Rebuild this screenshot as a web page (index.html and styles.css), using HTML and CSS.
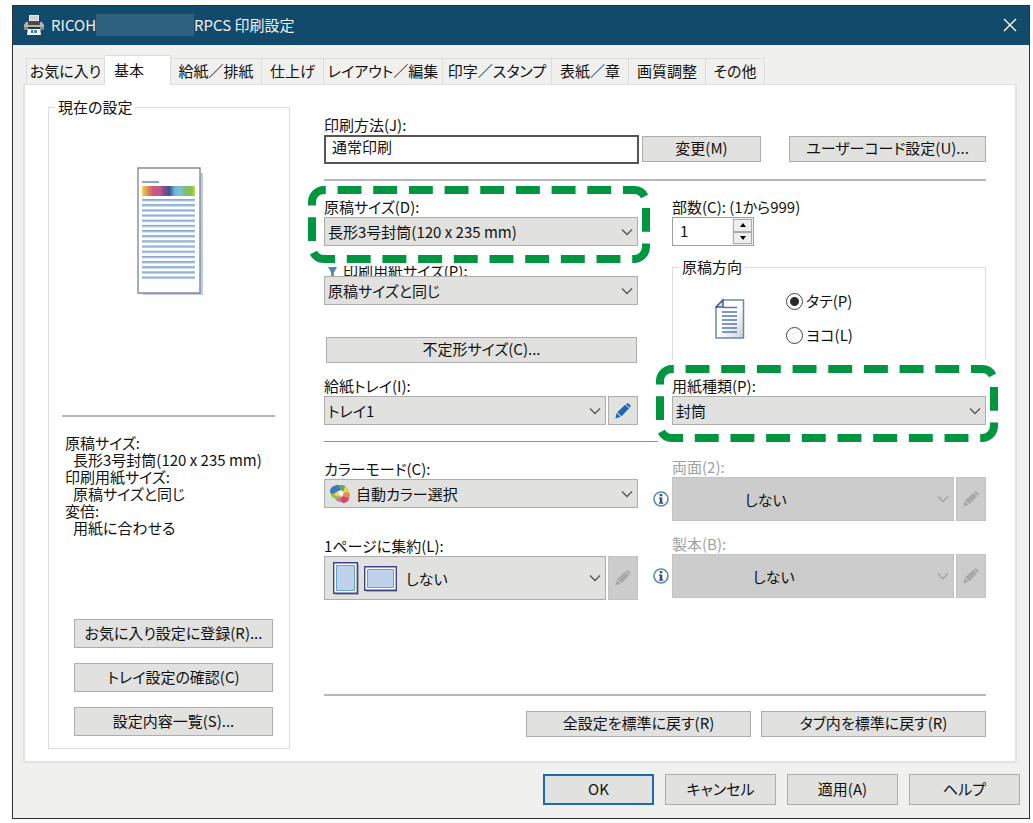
FILE: index.html
```html
<!DOCTYPE html>
<html lang="ja">
<head>
<meta charset="utf-8">
<title>RPCS 印刷設定</title>
<link rel="stylesheet" href="styles.css">
</head>
<body>
<svg class="defs" aria-hidden="true">
  <symbol id="chevron" viewBox="0 0 12 8"><path d="M1 1.5 6 6.5 11 1.5" fill="none" stroke="currentColor" stroke-width="1.3"/></symbol>
  <symbol id="pencil" viewBox="0 0 16 16"><path d="M11 1.200 12.200.300Q13 0 13.800.800L15.200 2.200Q16 3 15.300 4L14.500 4.800ZM10.200 1.800 14 5.600 6.500 13.200 2.200 9.200ZM1.600 10 5.600 13.800 .4 15.600Z" fill="currentColor"/></symbol>
  <symbol id="info" viewBox="0 0 16 16"><circle cx="8" cy="8" r="7" fill="#fff" stroke="#5a86be" stroke-width="1.600"/><path d="M6.700 3h2.600v2.200H6.700zM6 6.400h3.300v5h1v1.400H6v-1.400h.800V7.800H6z" fill="#2a5288"/></symbol>
</svg>
<div class="window">
  <header class="titlebar">
    <svg class="printer" viewBox="0 0 20 20" aria-hidden="true">
      <path d="M5 0h10v8H5z" fill="#e9e9e9"/><path d="M6 2h8M6 4h8" stroke="#bbb"/>
      <path d="M2 7h16l2 3v5H0v-5z" fill="#b4b4b4"/><path d="M4 6h12v4H4z" fill="#4a4a4a"/><path d="M0 12h20v3H0z" fill="#888"/>
      <path d="M4 12h12l1 8H3z" fill="#f5f5f5"/><path d="M4 12h12v2H4z" fill="#333"/>
      <path d="M7 15h2v3H7z" fill="#2a6fb0"/><path d="M10 15h3v3h-3z" fill="#2f9a8c"/>
    </svg>
    <h1>RICOH<span class="mask"></span>RPCS 印刷設定</h1>
    <button class="close" type="button" aria-label="閉じる"><svg viewBox="0 0 14 14"><path d="M1 1 13 13M13 1 1 13" stroke="#fff" stroke-width="1.4"/></svg></button>
  </header>

  <nav class="tabs" role="tablist">
    <button class="tab w79" role="tab" type="button">お気に入り</button>
    <button class="tab active" role="tab" type="button" aria-selected="true">基本</button>
    <button class="tab w91" role="tab" type="button">給紙／排紙</button>
    <button class="tab w62" role="tab" type="button">仕上げ</button>
    <button class="tab w119" role="tab" type="button">レイアウト／編集</button>
    <button class="tab w109" role="tab" type="button">印字／スタンプ</button>
    <button class="tab w77" role="tab" type="button">表紙／章</button>
    <button class="tab w77" role="tab" type="button">画質調整</button>
    <button class="tab w59" role="tab" type="button">その他</button>
  </nav>

  <main class="panel">
    <fieldset class="group current">
      <legend>現在の設定</legend>
      <div class="preview">
        <svg viewBox="0 0 68 129" aria-hidden="true">
          <defs>
            <linearGradient id="rainbow"><stop offset="0" stop-color="#f0d468"/><stop offset=".12" stop-color="#d98a4a"/><stop offset=".22" stop-color="#c9568a"/><stop offset=".34" stop-color="#c3568c"/><stop offset=".42" stop-color="#7a4f86"/><stop offset=".52" stop-color="#3f5590"/><stop offset=".62" stop-color="#6fb6dc"/><stop offset=".72" stop-color="#7cc4d0"/><stop offset=".82" stop-color="#7abf6c"/><stop offset=".94" stop-color="#8cc152"/><stop offset="1" stop-color="#c8d84a"/></linearGradient>
            <pattern id="rows" width="10" height="5.170" patternUnits="userSpaceOnUse" y="32"><path d="M0 0h10v2H0z" fill="#86a6d2"/><path d="M0 1.200h10v1H0z" fill="#a9c4e0"/></pattern>
          </defs>
          <path d="M6 6h60v122H6z" fill="#bccbea"/>
          <path d="M1 1h62v125H1z" fill="#fff" stroke="#868a90" stroke-width="1.400"/>
          <path d="M5 14h17v2H5z" fill="#86a6d2"/>
          <path d="M5 19h53v10H5z" fill="url(#rainbow)"/>
          <path d="M5 32h53v80H5z" fill="url(#rows)"/>
        </svg>
      </div>
      <hr>
      <dl class="summary">
        <dt>原稿サイズ:</dt><dd>長形3号封筒(120 x 235 mm)</dd>
        <dt>印刷用紙サイズ:</dt><dd>原稿サイズと同じ</dd>
        <dt>変倍:</dt><dd>用紙に合わせる</dd>
      </dl>
      <div class="stack">
        <button class="btn" type="button">お気に入り設定に登録(R)...</button>
        <button class="btn" type="button">トレイ設定の確認(C)</button>
        <button class="btn" type="button">設定内容一覧(S)...</button>
      </div>
    </fieldset>

    <section class="settings">
      <div class="method">
        <div class="field">
          <label for="method">印刷方法(J):</label>
          <input id="method" class="textbox" type="text" value="通常印刷" readonly>
        </div>
        <button class="btn change" type="button">変更(M)</button>
        <button class="btn usercode" type="button">ユーザーコード設定(U)...</button>
      </div>
      <hr class="rule-top">

      <div class="columns">
        <div class="col">
          <div class="field marked">
            <label for="size">原稿サイズ(D):</label>
            <div class="select"><select id="size"><option>長形3号封筒(120 x 235 mm)</option></select><svg><use href="#chevron"/></svg></div>
            <svg class="mark" aria-hidden="true"><rect class="ring" pathLength="2200"/></svg>
          </div>
          <div class="field paper">
            <label class="cut" for="paper"><span><svg viewBox="0 0 10 10" aria-hidden="true"><path d="M0 0h10L6.500 6v4h-3V6z" fill="#4b86bf"/></svg>印刷用紙サイズ(P):</span></label>
            <div class="select"><select id="paper"><option>原稿サイズと同じ</option></select><svg><use href="#chevron"/></svg></div>
          </div>
          <button class="btn custom" type="button">不定形サイズ(C)...</button>
          <div class="field tray">
            <label for="tray">給紙トレイ(I):</label>
            <div class="pair">
              <div class="select"><select id="tray"><option>トレイ1</option></select><svg><use href="#chevron"/></svg></div>
              <button class="edit" type="button" aria-label="トレイを編集"><svg><use href="#pencil"/></svg></button>
            </div>
          </div>
          <hr class="rule-mid">
          <div class="field">
            <label for="color">カラーモード(C):</label>
            <div class="select icon"><select id="color"><option>自動カラー選択</option></select>
              <svg class="swirl" viewBox="0 0 20 18" aria-hidden="true">
                <path d="M0 7C0 2 4 0 8 0Q12 1 12 5L8 6Q6 8 4 10Q1 10 0 7" fill="#3f78b8"/>
                <path d="M8 0Q14-1 16 2L14 8 11 5Q10 3 8 0" fill="#58ad62"/>
                <path d="M15 1Q20 4 19 8L13 8Q14 4 15 1" fill="#e8d040"/>
                <path d="M19 7Q21 12 18 14L13 11V8Z" fill="#e88a50"/>
                <path d="M13 11 19 13Q19 17 14 18Q10 18 10 13Z" fill="#d3486c"/>
                <path d="M10 12 11 17Q6 17 5 13Q7 12 10 12" fill="#e06aa0"/>
                <path d="M1 9Q5 9 8 6L9 10 11 12Q8 15 4 13Q1 12 1 9" fill="#8cc14c"/>
                <path d="M4 9 8 6 9 11Q6 12 4 9" fill="#f0d84a"/>
                <circle cx="11" cy="8" r="2.500" fill="#fff"/>
              </svg>
              <svg><use href="#chevron"/></svg></div>
          </div>
          <div class="field nup">
            <label for="nup">1ページに集約(L):</label>
            <div class="pair tall">
              <div class="select pages"><select id="nup"><option>しない</option></select>
                <svg class="sheets" viewBox="0 0 64 33" aria-hidden="true">
                  <path d="M2 2h24v31H2zM33 6h31v24H33z" fill="#a8a8a8"/>
                  <path d="M.700.700h23.600v30.600H.700zM31.700 4.700h31.600v23.600H31.700z" fill="#fff" stroke="#3c4488" stroke-width="1.400"/>
                  <path d="M3.500 3.500h18v25h-18zM34.500 7.500h26v18h-26z" fill="#bfd2ea" stroke="#65a3cf"/>
                </svg>
                <svg><use href="#chevron"/></svg></div>
              <button class="edit" type="button" disabled aria-label="集約を編集"><svg><use href="#pencil"/></svg></button>
            </div>
          </div>
        </div>

        <div class="col">
          <div class="field">
            <label for="copies">部数(C): (1から999)</label>
            <div class="spinner">
              <input id="copies" type="text" value="1">
              <div class="steps">
                <button type="button" aria-label="増やす"><svg viewBox="0 0 8 4"><path d="M1 4 4 0 7 4z"/></svg></button>
                <button type="button" aria-label="減らす"><svg viewBox="0 0 8 4"><path d="M1 0 4 4 7 0z"/></svg></button>
              </div>
            </div>
          </div>
          <fieldset class="group orient">
            <legend>原稿方向</legend>
            <svg class="doc" viewBox="0 0 30 40" aria-hidden="true">
              <defs><linearGradient id="sheet" x1="0" y1="0" x2="1" y2="1"><stop offset=".5" stop-color="#fff"/><stop offset="1" stop-color="#c9cfd6"/></linearGradient></defs>
              <path d="M8 1H28.500V39H1V8.500Z" fill="url(#sheet)" stroke="#6d86ac" stroke-width="1.500"/>
              <path d="M8 1V8H1Z" fill="#dfe8f4" stroke="#3d598c" stroke-width="1.500"/>
              <path d="M8 8.500H22M7 13H22M7 17H22M7 21H22M7 25H22M7 29H22M7 33H22" stroke="#5277b8" stroke-width="1.700"/>
            </svg>
            <div class="radios">
              <label><input type="radio" name="dir" checked>タテ(P)</label>
              <label><input type="radio" name="dir">ヨコ(L)</label>
            </div>
          </fieldset>
          <div class="field marked type">
            <label for="type">用紙種類(P):</label>
            <div class="select"><select id="type"><option>封筒</option></select><svg><use href="#chevron"/></svg></div>
            <svg class="mark" aria-hidden="true"><rect class="ring" pathLength="2200"/></svg>
          </div>
          <div class="field off duplex">
            <label for="duplex">両面(2):</label>
            <div class="pair tall">
              <div class="select near"><select id="duplex" disabled><option>しない</option></select><svg><use href="#chevron"/></svg></div>
              <button class="edit" type="button" disabled aria-label="両面を編集"><svg><use href="#pencil"/></svg></button>
            </div>
            <svg class="info"><use href="#info"/></svg>
          </div>
          <div class="field off booklet">
            <label for="booklet">製本(B):</label>
            <div class="pair tall">
              <div class="select far"><select id="booklet" disabled><option>しない</option></select><svg><use href="#chevron"/></svg></div>
              <button class="edit" type="button" disabled aria-label="製本を編集"><svg><use href="#pencil"/></svg></button>
            </div>
            <svg class="info"><use href="#info"/></svg>
          </div>
        </div>
      </div>

      <hr class="rule-bottom">
      <div class="resets">
        <button class="btn" type="button">全設定を標準に戻す(R)</button>
        <button class="btn" type="button">タブ内を標準に戻す(R)</button>
      </div>
    </section>
  </main>

  <footer class="actions">
    <button class="btn default" type="button">OK</button>
    <button class="btn" type="button">キャンセル</button>
    <button class="btn" type="button">適用(A)</button>
    <button class="btn" type="button">ヘルプ</button>
  </footer>
</div>
</body>
</html>
```
FILE: styles.css
```css
* { box-sizing: border-box; }

body {
  margin: 0;
  padding: 5px 3px 4px 12px;
  min-height: 100vh;
  display: flex;
  background: #fff;
  color: #111;
}

body, button, input, select {
  font-family: "Noto Sans CJK JP", sans-serif;
  font-size: 15px;
  font-feature-settings: "palt";
}

button, input, select { color: inherit; margin: 0; }
svg { display: block; }
.defs { display: none; }
hr { border: 0; margin: 0; height: 2px; background: #b8b8b8; }

.window {
  flex: 1;
  display: flex;
  flex-direction: column;
  background: #f0f0ef;
  border: 1px solid #2c3236;
}

/* title bar */
.titlebar {
  height: 39px;
  display: flex;
  align-items: center;
  padding: 0 12px 2px 11px;
  background: #124a6b;
  color: #f0f0f0;
}
.printer { width: 20px; height: 20px; }
.titlebar h1 {
  flex: 1;
  display: flex;
  align-items: center;
  margin: 0 0 0 7px;
  font-size: 15px;
  font-weight: 400;
  white-space: pre;
}
.mask { width: 98px; height: 22px; background: #2f6280; }
.close { padding: 0; border: 0; background: none; }
.close svg { width: 14px; height: 14px; }

/* tabs */
.tabs {
  display: flex;
  align-items: flex-end;
  height: 39px;
  padding-left: 13px;
}
.tab {
  height: 26px;
  padding: 0 0 2px;
  border: 1px solid #dcdcdc;
  border-width: 1px 1px 0 0;
  background: #f0f0ef;
  white-space: nowrap;
}
.tab:first-child { border-left-width: 1px; }
.tab.active {
  width: 66px;
  height: 30px;
  padding: 0 14px 3px 9px;
  margin-bottom: -1px;
  background: #fff;
  text-align: left;
  z-index: 1;
}
.w59 { width: 59px; }
.w62 { width: 62px; }
.w77 { width: 77px; }
.w79 { width: 79px; }
.w91 { width: 91px; }
.w109 { width: 109px; }
.w119 { width: 119px; }

/* tab page */
.panel {
  flex: 1;
  display: flex;
  gap: 34px;
  margin: 0 12px 0 10px;
  padding: 12px 29px 12px 23px;
  background: #fff;
  border: 2px solid #e2e2e2;
  border-top-width: 1px;
}

.group { margin: 0; padding: 0; border: 1px solid #dcdcdc; min-width: 0; }
.group legend { margin-left: 6px; padding: 0 3px; line-height: 20px; }

.current {
  flex: none;
  width: 242px;
  display: flex;
  flex-direction: column;
  padding-bottom: 12px;
}
.preview { padding: 50px 0 0 88px; }
.preview svg { width: 68px; height: 129px; }
.current hr { margin: 119px 14px 0 13px; }
.summary { margin: 17px 0 0 16px; line-height: 17px; white-space: nowrap; }
.summary dd { margin: 0 0 0 8px; }
.stack {
  margin: auto 16px 0 25px;
  display: flex;
  flex-direction: column;
  gap: 15px;
}

.btn {
  height: 26px;
  padding: 0 0 2px;
  border: 1px solid #adadad;
  background: #e1e1df;
  line-height: 20px;
  white-space: nowrap;
}
.stack .btn { height: 29px; }

/* settings */
.settings { flex: 1; min-width: 0; padding-top: 18px; }
.field { display: flex; flex-direction: column; position: relative; }
.field > label { line-height: 20px; height: 20px; white-space: nowrap; }
.field > .select { flex: none; }

.method { display: flex; align-items: flex-end; }
.method .field { flex: 0 1 315px; }
.textbox {
  width: 100%;
  height: 29px;
  padding: 0 6px 6px;
  border: 2px solid #555;
  background: #fff;
}
.change { width: 119px; margin: 0 28px 2px 3px; }
.usercode { flex: 1; margin-bottom: 2px; }
.rule-top { margin-top: 15px; }

.columns {
  display: grid;
  grid-template-columns: minmax(0, 1fr) minmax(0, 1fr);
  gap: 34px;
  margin-top: 16px;
}

.select { display: grid; flex: 1; min-width: 0; height: 29px; }
.select > * { grid-area: 1 / 1; }
.select select {
  appearance: none;
  width: 100%;
  padding: 0 30px 0 3px;
  border: 1px solid #adadad;
  border-radius: 0;
  background: #e1e1df;
  opacity: 1;
}
.select > svg {
  width: 12px;
  height: 8px;
  margin-right: 5px;
  align-self: center;
  justify-self: end;
  color: #555;
  pointer-events: none;
}
.select.icon select { padding-left: 31px; }
.select > .swirl { width: 20px; height: 18px; margin-left: 6px; justify-self: start; }
.select.pages select { padding-left: 81px; }
.select > .sheets { width: 64px; height: 33px; margin-left: 9px; justify-self: start; }
.select.near select { padding-left: 72px; }
.select.far select { padding-left: 80px; }

.pair { display: flex; gap: 2px; height: 29px; }
.pair.tall, .tall .select { height: 44px; }
.edit {
  width: 30px;
  padding: 0 0 0 6px;
  border: 1px solid #adadad;
  background: #e1e1df;
  color: #1b69b0;
}
.edit svg { width: 16px; height: 16px; }
.edit:disabled { background: #ccc; color: #a8a8a8; border-color: #c2c2c2; }

.paper { margin-top: 20px; }
.field > .cut {
  height: 10px;
  overflow: hidden;
  display: flex;
  align-items: center;
}
.cut span { display: flex; align-items: center; gap: 6px; padding-left: 4px; line-height: 20px; }
.cut svg { width: 9px; height: 9px; }
.custom { width: calc(100% - 3px); margin: 32px 0 13px 2px; display: block; }
.rule-mid { margin: 16px -20px 17px 0; height: 1px; background: #909090; }
.nup { margin-top: 28px; }

.spinner {
  display: flex;
  width: 82px;
  height: 29px;
  border: 1px solid #a0a0a0;
  background: #fff;
}
.spinner input { flex: 1; min-width: 0; border: 0; padding: 0 7px 3px; background: none; }
.steps { display: flex; flex-direction: column; padding: 1px; width: 21px; background: #f0f0ef; }
.steps button {
  flex: 1;
  padding: 0 5px;
  border: 1px solid #aaa;
  background: #eee;
}
.steps svg { width: 8px; height: 4px; }

.orient {
  display: flex;
  height: 103px;
  margin-top: 11px;
  border-bottom: 0;
}
.doc { width: 30px; height: 40px; margin: 22px 0 0 42px; }
.radios { display: flex; flex-direction: column; gap: 14px; margin: 14px 0 0 41px; }
.radios label { display: flex; align-items: center; gap: 3px; line-height: 20px; }
.radios input {
  appearance: none;
  width: 17px;
  height: 17px;
  margin: 0;
  border: 1px solid #444;
  border-radius: 50%;
  background: #fff;
}
.radios input:checked { background: radial-gradient(circle, #2a2a2a 4px, #fff 5px); }

.type { margin-top: 16px; }
.duplex { margin-top: 32px; }
.booklet { margin-top: 13px; }
.off > label { color: #a0a0a0; }
.off select { background: #ccc; border-color: #c2c2c2; color: #111; }
.off .select > svg { color: #a2a2a2; }
.info { position: absolute; left: -19px; top: 34px; width: 16px; height: 16px; }

/* dashed callout drawn over a field */
.mark {
  position: absolute;
  left: -16px;
  top: -11px;
  width: calc(100% + 28px);
  height: 77px;
  pointer-events: none;
}
.ring {
  x: 4px;
  y: 4px;
  width: calc(100% - 8px);
  height: calc(100% - 8px);
  rx: 12px;
  fill: none;
  stroke: #009541;
  stroke-width: 8px;
  stroke-dasharray: 67 33;
  stroke-dashoffset: -38;
}

.rule-bottom { margin-top: 94px; }
.resets { display: flex; justify-content: flex-end; gap: 10px; margin-top: 15px; }
.resets .btn { width: 225px; }

/* dialog buttons */
.actions {
  display: flex;
  justify-content: flex-end;
  gap: 11px;
  padding: 11px 9px 13px;
}
.actions .btn { width: 111px; height: 31px; }
.actions .default { border: 2px solid #1b69b0; }
```
